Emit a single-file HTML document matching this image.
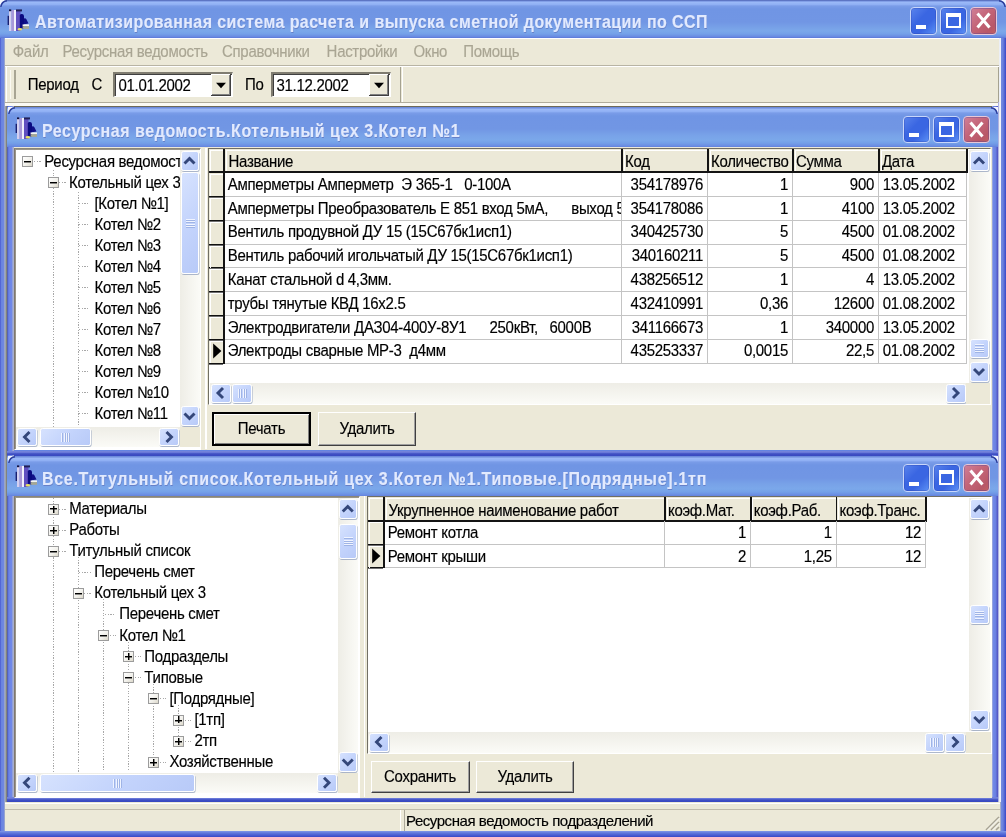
<!DOCTYPE html><html><head><meta charset="utf-8"><style>
*{margin:0;padding:0;box-sizing:border-box}
html,body{width:1006px;height:837px;overflow:hidden;background:#ECE9D8;position:relative;font-family:"Liberation Sans",sans-serif}
div,svg{position:absolute}
.t{position:absolute;white-space:pre;line-height:1;transform:scaleY(1.1);transform-origin:0 0;-webkit-text-stroke:0.15px currentColor;font-family:"Liberation Sans",sans-serif}
.sb{position:absolute;border-radius:2.5px;border:1px solid #FFFFFF;background:linear-gradient(135deg,#D6E2FE 0%,#C4D4FC 50%,#B8CAF8 100%);box-shadow:0.6px 1px 0.6px rgba(110,130,170,0.55)}
</style></head><body><div style="left:0;top:0;width:1006px;height:837px;overflow:hidden;filter:blur(0.4px)"><div style="position:absolute;left:0px;top:0px;width:1006px;height:837px;background:#6584E2"></div>
<div style="position:absolute;left:0px;top:0px;width:1006px;height:38px;background:linear-gradient(to bottom,#5064B0 0px,#6A86D8 1px,#9CBAF8 2px,#90B0F4 4.5px,#7A9CE8 6px,#7095E4 9px,#7196E4 22px,#78A2E8 28px,#7BA8EA 31px,#74A0E8 34px,#6A8CE2 36.5px,#5A78D8 38px);border-radius:7px 7px 0 0"></div>
<svg style="left:0px;top:0px" width="8" height="8"><path d="M0 0 L7 0 C3 0.5 0.5 3 0 7 Z" fill="#F4F6FF"/><path d="M7 0.8 C3.5 1.3 1.3 3.5 0.8 7" fill="none" stroke="#2A3C9A" stroke-width="1.4"/></svg>
<svg style="left:998px;top:0px" width="8" height="8"><path d="M8 0 L1 0 C5 0.5 7.5 3 8 7 Z" fill="#F4F6FF"/><path d="M1 0.8 C4.5 1.3 6.7 3.5 7.2 7" fill="none" stroke="#2A3C9A" stroke-width="1.4"/></svg>
<div style="position:absolute;left:0px;top:38px;width:8px;height:799px;background:linear-gradient(to right,#4858D0 0px,#6A84E0 1.5px,#7088E0 3.5px,#A8B0C8 5px,#909080 6.2px,#606878 7.2px,#5868D8 8px)"></div>
<div style="position:absolute;left:998px;top:38px;width:8px;height:799px;background:linear-gradient(to right,#5050C0 0px,#E8ECF4 0.8px,#F0F2F8 2.5px,#7088E0 3.5px,#6A80DC 5px,#3848C8 8px)"></div>
<div style="position:absolute;left:0px;top:831px;width:1006px;height:6px;background:linear-gradient(to bottom,#8098E8 0px,#6078DC 2px,#3848C8 6px)"></div>
<div style="position:absolute;left:5px;top:38px;width:993.5px;height:64px;background:#ECE9D8"></div>
<div style="position:absolute;left:0px;top:802px;width:1001px;height:29px;background:linear-gradient(to right,#4858D0 0px,#6A84E0 1.5px,#7088E0 3.5px,#A8B0C8 5px)"></div>
<div style="position:absolute;left:5px;top:802px;width:995px;height:29px;background:#ECE9D8"></div>
<svg style="left:7.4px;top:7.9px;filter:blur(0.35px)" width="24" height="24" viewBox="0 0 24 24">
<rect x="0.6" y="7.8" width="1.5" height="9.2" fill="#182070"/>
<rect x="2" y="3" width="2.5" height="20" fill="#D4D0F0"/>
<rect x="4.5" y="2" width="2.5" height="21" fill="#A898D8"/>
<rect x="7" y="2" width="2" height="21" fill="#F0F0FC"/>
<rect x="9" y="2" width="4.5" height="21" fill="#6050C0"/>
<rect x="2" y="1.4" width="2.2" height="1.8" fill="#101040"/>
<rect x="9" y="1.4" width="6" height="2" fill="#202058"/>
<path d="M12.8 7 Q13.5 5.8 15 6 Q16.8 6.2 17 8 L17 20.4 L12.8 20.4 Z" fill="#0A0A80"/>
<path d="M17 10.5 Q18.5 9.8 19.5 11.5 L21.5 15.5 L17 16.2 Z" fill="#101088"/>
<rect x="15.6" y="16.4" width="6.4" height="1.8" fill="#F4F4F0"/>
<rect x="15.6" y="18.2" width="6.4" height="2.6" fill="#A8A890"/>
<ellipse cx="12.8" cy="21.2" rx="2.3" ry="1.3" fill="#E8E060"/>
</svg>
<div class="t" style="left:34.5px;top:12.87px;font-size:17px;color:#E2EAFE;font-weight:bold;letter-spacing:0.45px;transform:scale(0.94,1.08);text-shadow:0.5px 0.5px 0 #6680C8;">Автоматизированная система расчета и выпуска сметной документации по ССП</div>
<div style="left:910.00px;top:7px;width:27px;height:27.5px;border-radius:4px;border:1.8px solid #C8D6FA;background:linear-gradient(135deg,#5A84EC 0%,#3A66E2 40%,#3A66E2 65%,#5C92F6 100%);box-shadow:inset 0 0 0 0.7px rgba(40,60,160,0.35)"></div>
<div style="position:absolute;left:916.0px;top:24.5px;width:10px;height:4px;background:#fff"></div>
<div style="left:939.75px;top:7px;width:27px;height:27.5px;border-radius:4px;border:1.8px solid #C8D6FA;background:linear-gradient(135deg,#5A84EC 0%,#3A66E2 40%,#3A66E2 65%,#5C92F6 100%);box-shadow:inset 0 0 0 0.7px rgba(40,60,160,0.35)"></div>
<div style="position:absolute;left:945.75px;top:13px;width:15px;height:15px;border:2px solid #fff;border-top-width:4px"></div>
<div style="left:969.50px;top:7px;width:27px;height:27.5px;border-radius:4px;border:1.8px solid #E8C8D8;background:linear-gradient(135deg,#D08098 0%,#C46478 45%,#B85868 80%,#C46060 100%);box-shadow:inset 0 0 0 0.7px rgba(40,60,160,0.35)"></div>
<svg style="left:969.50px;top:7px" width="27" height="27.5"><path d="M7.5 6.5 L19.5 20.5 M19.5 6.5 L7.5 20.5" stroke="#fff" stroke-width="3"/></svg>
<div style="position:absolute;left:5px;top:38px;width:993.5px;height:1px;background:#FFFFFF"></div>
<div style="position:absolute;left:5px;top:65px;width:993.5px;height:1px;background:#B8B4A4"></div>
<div style="position:absolute;left:5px;top:66px;width:993.5px;height:1px;background:#FFFFFF"></div>
<div class="t" style="left:12.75px;top:42.75px;font-size:15px;color:#A9A593;font-weight:normal;letter-spacing:-0.3px;">Файл</div>
<div class="t" style="left:62.4px;top:42.75px;font-size:15px;color:#A9A593;font-weight:normal;letter-spacing:-0.3px;">Ресурсная ведомость</div>
<div class="t" style="left:222px;top:42.75px;font-size:15px;color:#A9A593;font-weight:normal;letter-spacing:-0.3px;">Справочники</div>
<div class="t" style="left:326.6px;top:42.75px;font-size:15px;color:#A9A593;font-weight:normal;letter-spacing:-0.3px;">Настройки</div>
<div class="t" style="left:413.5px;top:42.75px;font-size:15px;color:#A9A593;font-weight:normal;letter-spacing:-0.3px;">Окно</div>
<div class="t" style="left:463.2px;top:42.75px;font-size:15px;color:#A9A593;font-weight:normal;letter-spacing:-0.3px;">Помощь</div>
<div style="position:absolute;left:5px;top:67px;width:396px;height:35px;border-right:1px solid #A5A290"></div>
<div style="position:absolute;left:402px;top:67px;width:1px;height:35px;background:#FFFFFF"></div>
<div style="position:absolute;left:998px;top:67px;width:1px;height:35px;background:#A5A290"></div>
<div style="position:absolute;left:5px;top:102px;width:993px;height:1px;background:#B0AC9C"></div>
<div style="position:absolute;left:5px;top:103px;width:993px;height:2.5px;background:#FBFAF4"></div>
<div style="position:absolute;left:5.5px;top:67px;width:1px;height:35px;background:#FFFFFF"></div>
<div style="position:absolute;left:9.5px;top:70px;width:1px;height:29px;background:#FAF9F2"></div>
<div style="position:absolute;left:14px;top:70px;width:1.5px;height:29px;background:#A8A594"></div>
<div class="t" style="left:27.8px;top:76.15px;font-size:15px;color:#000;font-weight:normal;letter-spacing:-0.3px;">Период</div>
<div class="t" style="left:91.5px;top:76.15px;font-size:15px;color:#000;font-weight:normal;letter-spacing:-0.3px;">С</div>
<div class="t" style="left:245px;top:76.15px;font-size:15px;color:#000;font-weight:normal;letter-spacing:-0.3px;">По</div>
<div style="position:absolute;left:112.5px;top:72px;width:120px;height:24.5px;background:#fff;border-top:2px solid #7F7C70;border-left:2px solid #7F7C70;border-right:1px solid #fff;border-bottom:1px solid #fff;box-shadow:inset 1px 1px 0 #404040"></div>
<div style="position:absolute;left:210.5px;top:74px;width:20px;height:21.5px;background:#ECE9D8;border-right:1px solid #404040;border-bottom:1px solid #404040;box-shadow:inset 1px 1px 0 #fff,inset -1px -1px 0 #808080"></div>
<svg style="left:210.5px;top:74px" width="20" height="21.5"><path d="M5 8.75 L15 8.75 L10 14.25 Z" fill="#000"/></svg>
<div class="t" style="left:118.5px;top:77.15px;font-size:15px;color:#000;font-weight:normal;letter-spacing:-0.3px;">01.01.2002</div>
<div style="position:absolute;left:270.5px;top:72px;width:120px;height:24.5px;background:#fff;border-top:2px solid #7F7C70;border-left:2px solid #7F7C70;border-right:1px solid #fff;border-bottom:1px solid #fff;box-shadow:inset 1px 1px 0 #404040"></div>
<div style="position:absolute;left:368.5px;top:74px;width:20px;height:21.5px;background:#ECE9D8;border-right:1px solid #404040;border-bottom:1px solid #404040;box-shadow:inset 1px 1px 0 #fff,inset -1px -1px 0 #808080"></div>
<svg style="left:368.5px;top:74px" width="20" height="21.5"><path d="M5 8.75 L15 8.75 L10 14.25 Z" fill="#000"/></svg>
<div class="t" style="left:276.5px;top:77.15px;font-size:15px;color:#000;font-weight:normal;letter-spacing:-0.3px;">31.12.2002</div>
<div style="position:absolute;left:7px;top:106px;width:991px;height:1px;background:#6E6A58"></div>
<div style="position:absolute;left:7.3px;top:106px;width:6.7px;height:349.5px;background:linear-gradient(to right,#505878 0px,#5868D8 0.8px,#6A84E6 2px,#7088E8 4.5px,#A8B0D0 6.2px)"></div>
<div style="position:absolute;left:992px;top:106px;width:6px;height:349.5px;background:linear-gradient(to right,#A8B0D8 0px,#7088E8 1.5px,#6A80E0 3.5px,#5050C0 6px)"></div>
<div style="position:absolute;left:7.3px;top:107px;width:990.7px;height:40px;background:linear-gradient(to bottom,#7090E0 0px,#6A86D8 1px,#9CBAF8 2px,#90B0F4 4.5px,#7A9CE8 6px,#7095E4 9px,#7196E4 22px,#78A2E8 28px,#7BA8EA 33px,#74A0E8 36px,#6A8CE2 39px,#5A78D8 41px)"></div>
<svg style="left:8px;top:107px" width="8" height="8"><path d="M0 0 L7 0 C3 0.5 0.5 3 0 7 Z" fill="#F4F6FF"/><path d="M7 0.8 C3.5 1.3 1.3 3.5 0.8 7" fill="none" stroke="#2A3C9A" stroke-width="1.4"/></svg>
<svg style="left:990px;top:107px" width="8" height="8"><path d="M8 0 L1 0 C5 0.5 7.5 3 8 7 Z" fill="#F4F6FF"/><path d="M1 0.8 C4.5 1.3 6.7 3.5 7.2 7" fill="none" stroke="#2A3C9A" stroke-width="1.4"/></svg>
<div style="position:absolute;left:7.3px;top:450.5px;width:990.7px;height:5px;background:linear-gradient(to bottom,#7888DC 0px,#6878D8 1.5px,#4050C4 2.8px,#3848C0 5px)"></div>
<svg style="left:15px;top:116px;filter:blur(0.35px)" width="24" height="24" viewBox="0 0 24 24">
<rect x="0.6" y="7.8" width="1.5" height="9.2" fill="#182070"/>
<rect x="2" y="3" width="2.5" height="20" fill="#D4D0F0"/>
<rect x="4.5" y="2" width="2.5" height="21" fill="#A898D8"/>
<rect x="7" y="2" width="2" height="21" fill="#F0F0FC"/>
<rect x="9" y="2" width="4.5" height="21" fill="#6050C0"/>
<rect x="2" y="1.4" width="2.2" height="1.8" fill="#101040"/>
<rect x="9" y="1.4" width="6" height="2" fill="#202058"/>
<path d="M12.8 7 Q13.5 5.8 15 6 Q16.8 6.2 17 8 L17 20.4 L12.8 20.4 Z" fill="#0A0A80"/>
<path d="M17 10.5 Q18.5 9.8 19.5 11.5 L21.5 15.5 L17 16.2 Z" fill="#101088"/>
<rect x="15.6" y="16.4" width="6.4" height="1.8" fill="#F4F4F0"/>
<rect x="15.6" y="18.2" width="6.4" height="2.6" fill="#A8A890"/>
<ellipse cx="12.8" cy="21.2" rx="2.3" ry="1.3" fill="#E8E060"/>
</svg>
<div class="t" style="left:42px;top:121.67px;font-size:17px;color:#E2EAFE;font-weight:bold;letter-spacing:0.6px;transform:scale(0.94,1.08);text-shadow:0.5px 0.5px 0 #6680C8;">Ресурсная ведомость.Котельный цех 3.Котел №1</div>
<div style="left:903.00px;top:115.5px;width:27px;height:27.5px;border-radius:4px;border:1.8px solid #C8D6FA;background:linear-gradient(135deg,#5A84EC 0%,#3A66E2 40%,#3A66E2 65%,#5C92F6 100%);box-shadow:inset 0 0 0 0.7px rgba(40,60,160,0.35)"></div>
<div style="position:absolute;left:909.0px;top:133.0px;width:10px;height:4px;background:#fff"></div>
<div style="left:932.75px;top:115.5px;width:27px;height:27.5px;border-radius:4px;border:1.8px solid #C8D6FA;background:linear-gradient(135deg,#5A84EC 0%,#3A66E2 40%,#3A66E2 65%,#5C92F6 100%);box-shadow:inset 0 0 0 0.7px rgba(40,60,160,0.35)"></div>
<div style="position:absolute;left:938.75px;top:121.5px;width:15px;height:15px;border:2px solid #fff;border-top-width:4px"></div>
<div style="left:962.50px;top:115.5px;width:27px;height:27.5px;border-radius:4px;border:1.8px solid #E8C8D8;background:linear-gradient(135deg,#D08098 0%,#C46478 45%,#B85868 80%,#C46060 100%);box-shadow:inset 0 0 0 0.7px rgba(40,60,160,0.35)"></div>
<svg style="left:962.50px;top:115.5px" width="27" height="27.5"><path d="M7.5 6.5 L19.5 20.5 M19.5 6.5 L7.5 20.5" stroke="#fff" stroke-width="3"/></svg>
<div style="position:absolute;left:14px;top:147px;width:978px;height:303px;background:#ECE9D8"></div>
<div style="position:absolute;left:205px;top:148px;width:1.8px;height:301px;background:#FFFFFF"></div>
<div style="position:absolute;left:7.3px;top:455px;width:6.7px;height:347px;background:linear-gradient(to right,#505878 0px,#5868D8 0.8px,#6A84E6 2px,#7088E8 4.5px,#A8B0D0 6.2px)"></div>
<div style="position:absolute;left:992px;top:455px;width:6px;height:347px;background:linear-gradient(to right,#A8B0D8 0px,#7088E8 1.5px,#6A80E0 3.5px,#5050C0 6px)"></div>
<div style="position:absolute;left:7.3px;top:456px;width:990.7px;height:40px;background:linear-gradient(to bottom,#7090E0 0px,#6A86D8 1px,#9CBAF8 2px,#90B0F4 4.5px,#7A9CE8 6px,#7095E4 9px,#7196E4 22px,#78A2E8 28px,#7BA8EA 33px,#74A0E8 36px,#6A8CE2 39px,#5A78D8 41px)"></div>
<svg style="left:8px;top:456px" width="8" height="8"><path d="M0 0 L7 0 C3 0.5 0.5 3 0 7 Z" fill="#F4F6FF"/><path d="M7 0.8 C3.5 1.3 1.3 3.5 0.8 7" fill="none" stroke="#2A3C9A" stroke-width="1.4"/></svg>
<svg style="left:990px;top:456px" width="8" height="8"><path d="M8 0 L1 0 C5 0.5 7.5 3 8 7 Z" fill="#F4F6FF"/><path d="M1 0.8 C4.5 1.3 6.7 3.5 7.2 7" fill="none" stroke="#2A3C9A" stroke-width="1.4"/></svg>
<div style="position:absolute;left:7.3px;top:797px;width:990.7px;height:5px;background:linear-gradient(to bottom,#7888DC 0px,#6878D8 1.5px,#4050C4 2.8px,#3848C0 5px)"></div>
<svg style="left:15px;top:464.2px;filter:blur(0.35px)" width="24" height="24" viewBox="0 0 24 24">
<rect x="0.6" y="7.8" width="1.5" height="9.2" fill="#182070"/>
<rect x="2" y="3" width="2.5" height="20" fill="#D4D0F0"/>
<rect x="4.5" y="2" width="2.5" height="21" fill="#A898D8"/>
<rect x="7" y="2" width="2" height="21" fill="#F0F0FC"/>
<rect x="9" y="2" width="4.5" height="21" fill="#6050C0"/>
<rect x="2" y="1.4" width="2.2" height="1.8" fill="#101040"/>
<rect x="9" y="1.4" width="6" height="2" fill="#202058"/>
<path d="M12.8 7 Q13.5 5.8 15 6 Q16.8 6.2 17 8 L17 20.4 L12.8 20.4 Z" fill="#0A0A80"/>
<path d="M17 10.5 Q18.5 9.8 19.5 11.5 L21.5 15.5 L17 16.2 Z" fill="#101088"/>
<rect x="15.6" y="16.4" width="6.4" height="1.8" fill="#F4F4F0"/>
<rect x="15.6" y="18.2" width="6.4" height="2.6" fill="#A8A890"/>
<ellipse cx="12.8" cy="21.2" rx="2.3" ry="1.3" fill="#E8E060"/>
</svg>
<div class="t" style="left:42px;top:470.07px;font-size:17px;color:#E2EAFE;font-weight:bold;letter-spacing:0.76px;transform:scale(0.94,1.08);text-shadow:0.5px 0.5px 0 #6680C8;">Все.Титульный список.Котельный цех 3.Котел №1.Типовые.[Подрядные].1тп</div>
<div style="left:903.00px;top:464px;width:27px;height:27.5px;border-radius:4px;border:1.8px solid #C8D6FA;background:linear-gradient(135deg,#5A84EC 0%,#3A66E2 40%,#3A66E2 65%,#5C92F6 100%);box-shadow:inset 0 0 0 0.7px rgba(40,60,160,0.35)"></div>
<div style="position:absolute;left:909.0px;top:481.5px;width:10px;height:4px;background:#fff"></div>
<div style="left:932.75px;top:464px;width:27px;height:27.5px;border-radius:4px;border:1.8px solid #C8D6FA;background:linear-gradient(135deg,#5A84EC 0%,#3A66E2 40%,#3A66E2 65%,#5C92F6 100%);box-shadow:inset 0 0 0 0.7px rgba(40,60,160,0.35)"></div>
<div style="position:absolute;left:938.75px;top:470px;width:15px;height:15px;border:2px solid #fff;border-top-width:4px"></div>
<div style="left:962.50px;top:464px;width:27px;height:27.5px;border-radius:4px;border:1.8px solid #E8C8D8;background:linear-gradient(135deg,#D08098 0%,#C46478 45%,#B85868 80%,#C46060 100%);box-shadow:inset 0 0 0 0.7px rgba(40,60,160,0.35)"></div>
<svg style="left:962.50px;top:464px" width="27" height="27.5"><path d="M7.5 6.5 L19.5 20.5 M19.5 6.5 L7.5 20.5" stroke="#fff" stroke-width="3"/></svg>
<div style="position:absolute;left:14px;top:496px;width:978px;height:301.5px;background:#ECE9D8"></div>
<div style="position:absolute;left:363.5px;top:496px;width:1.8px;height:301px;background:#FFFFFF"></div>
<div style="left:14px;top:148px;width:187px;height:302px;background:#fff;border-top:1px solid #8A8678;border-left:1.5px solid #807870;border-right:1px solid #fff;border-bottom:1.5px solid #fff;box-shadow:inset 1px 1px 0 #9A968A"></div>
<div style="position:absolute;left:33.5px;top:161.1px;width:7.5px;height:1px;background:repeating-linear-gradient(to right,#A8A8A8 0px,#A8A8A8 1.2px,transparent 1.2px,transparent 2.7px)"></div>
<div class="t" style="left:44.3px;top:152.55px;font-size:15px;color:#000;font-weight:normal;letter-spacing:-0.3px;">Ресурсная ведомость</div>
<div style="position:absolute;left:52.8px;top:170.4px;width:1px;height:6.099999999999994px;background:repeating-linear-gradient(to bottom,#A8A8A8 0px,#A8A8A8 1.2px,transparent 1.2px,transparent 2.7px)"></div>
<div style="position:absolute;left:59px;top:182.1px;width:7px;height:1px;background:repeating-linear-gradient(to right,#A8A8A8 0px,#A8A8A8 1.2px,transparent 1.2px,transparent 2.7px)"></div>
<div class="t" style="left:69px;top:173.55px;font-size:15px;color:#000;font-weight:normal;letter-spacing:-0.3px;">Котельный цех 3</div>
<div style="position:absolute;left:52.8px;top:187.5px;width:1px;height:239.5px;background:repeating-linear-gradient(to bottom,#A8A8A8 0px,#A8A8A8 1.2px,transparent 1.2px,transparent 2.7px)"></div>
<div style="position:absolute;left:77.6px;top:191.7px;width:1px;height:235.3px;background:repeating-linear-gradient(to bottom,#A8A8A8 0px,#A8A8A8 1.2px,transparent 1.2px,transparent 2.7px)"></div>
<div style="position:absolute;left:79px;top:203.1px;width:11px;height:1px;background:repeating-linear-gradient(to right,#A8A8A8 0px,#A8A8A8 1.2px,transparent 1.2px,transparent 2.7px)"></div>
<div class="t" style="left:94.5px;top:194.55px;font-size:15px;color:#000;font-weight:normal;letter-spacing:-0.3px;">[Котел №1]</div>
<div style="position:absolute;left:79px;top:224.1px;width:11px;height:1px;background:repeating-linear-gradient(to right,#A8A8A8 0px,#A8A8A8 1.2px,transparent 1.2px,transparent 2.7px)"></div>
<div class="t" style="left:94.5px;top:215.55px;font-size:15px;color:#000;font-weight:normal;letter-spacing:-0.3px;">Котел №2</div>
<div style="position:absolute;left:79px;top:245.1px;width:11px;height:1px;background:repeating-linear-gradient(to right,#A8A8A8 0px,#A8A8A8 1.2px,transparent 1.2px,transparent 2.7px)"></div>
<div class="t" style="left:94.5px;top:236.55px;font-size:15px;color:#000;font-weight:normal;letter-spacing:-0.3px;">Котел №3</div>
<div style="position:absolute;left:79px;top:266.1px;width:11px;height:1px;background:repeating-linear-gradient(to right,#A8A8A8 0px,#A8A8A8 1.2px,transparent 1.2px,transparent 2.7px)"></div>
<div class="t" style="left:94.5px;top:257.55px;font-size:15px;color:#000;font-weight:normal;letter-spacing:-0.3px;">Котел №4</div>
<div style="position:absolute;left:79px;top:287.1px;width:11px;height:1px;background:repeating-linear-gradient(to right,#A8A8A8 0px,#A8A8A8 1.2px,transparent 1.2px,transparent 2.7px)"></div>
<div class="t" style="left:94.5px;top:278.55px;font-size:15px;color:#000;font-weight:normal;letter-spacing:-0.3px;">Котел №5</div>
<div style="position:absolute;left:79px;top:308.1px;width:11px;height:1px;background:repeating-linear-gradient(to right,#A8A8A8 0px,#A8A8A8 1.2px,transparent 1.2px,transparent 2.7px)"></div>
<div class="t" style="left:94.5px;top:299.55px;font-size:15px;color:#000;font-weight:normal;letter-spacing:-0.3px;">Котел №6</div>
<div style="position:absolute;left:79px;top:329.1px;width:11px;height:1px;background:repeating-linear-gradient(to right,#A8A8A8 0px,#A8A8A8 1.2px,transparent 1.2px,transparent 2.7px)"></div>
<div class="t" style="left:94.5px;top:320.55px;font-size:15px;color:#000;font-weight:normal;letter-spacing:-0.3px;">Котел №7</div>
<div style="position:absolute;left:79px;top:350.1px;width:11px;height:1px;background:repeating-linear-gradient(to right,#A8A8A8 0px,#A8A8A8 1.2px,transparent 1.2px,transparent 2.7px)"></div>
<div class="t" style="left:94.5px;top:341.55px;font-size:15px;color:#000;font-weight:normal;letter-spacing:-0.3px;">Котел №8</div>
<div style="position:absolute;left:79px;top:371.1px;width:11px;height:1px;background:repeating-linear-gradient(to right,#A8A8A8 0px,#A8A8A8 1.2px,transparent 1.2px,transparent 2.7px)"></div>
<div class="t" style="left:94.5px;top:362.55px;font-size:15px;color:#000;font-weight:normal;letter-spacing:-0.3px;">Котел №9</div>
<div style="position:absolute;left:79px;top:392.1px;width:11px;height:1px;background:repeating-linear-gradient(to right,#A8A8A8 0px,#A8A8A8 1.2px,transparent 1.2px,transparent 2.7px)"></div>
<div class="t" style="left:94.5px;top:383.55px;font-size:15px;color:#000;font-weight:normal;letter-spacing:-0.3px;">Котел №10</div>
<div style="position:absolute;left:79px;top:413.1px;width:11px;height:1px;background:repeating-linear-gradient(to right,#A8A8A8 0px,#A8A8A8 1.2px,transparent 1.2px,transparent 2.7px)"></div>
<div class="t" style="left:94.5px;top:404.55px;font-size:15px;color:#000;font-weight:normal;letter-spacing:-0.3px;">Котел №11</div>
<div style="left:22.4px;top:156.1px;width:11px;height:11px;border:1px solid #9C9C9C;background:linear-gradient(135deg,#fff 0%,#F2F1EC 55%,#DCD8CA 100%)"></div>
<div style="position:absolute;left:24px;top:161px;width:7px;height:1px;background:#000"></div>
<div style="position:absolute;left:24px;top:162px;width:7px;height:1px;background:rgba(0,0,0,0.45)"></div>
<div style="left:47.8px;top:177.1px;width:11px;height:11px;border:1px solid #9C9C9C;background:linear-gradient(135deg,#fff 0%,#F2F1EC 55%,#DCD8CA 100%)"></div>
<div style="position:absolute;left:50px;top:182px;width:7px;height:1px;background:#000"></div>
<div style="position:absolute;left:50px;top:183px;width:7px;height:1px;background:rgba(0,0,0,0.45)"></div>
<div style="position:absolute;left:179.5px;top:150px;width:20px;height:277px;background:linear-gradient(to right,#EEEDE6,#FBFBF7)"></div>
<div class="sb" style="left:180.5px;top:151px;width:18px;height:20px"></div>
<svg style="left:0;top:0;overflow:visible" width="1" height="1"><path d="M184.5 163.5 L189.5 158.5 L194.5 163.5" fill="none" stroke="#34477A" stroke-width="2.9"/></svg>
<div class="sb" style="left:180.5px;top:406px;width:18px;height:20px"></div>
<svg style="left:0;top:0;overflow:visible" width="1" height="1"><path d="M184.5 413.5 L189.5 418.5 L194.5 413.5" fill="none" stroke="#34477A" stroke-width="2.9"/></svg>
<div class="sb" style="left:180.5px;top:172px;width:18px;height:102px"></div>
<div style="position:absolute;left:185.5px;top:219.0px;width:9px;height:1px;background:#F0F4FF;box-shadow:0 1px 0 #9FB4E6"></div>
<div style="position:absolute;left:185.5px;top:221.3px;width:9px;height:1px;background:#F0F4FF;box-shadow:0 1px 0 #9FB4E6"></div>
<div style="position:absolute;left:185.5px;top:223.6px;width:9px;height:1px;background:#F0F4FF;box-shadow:0 1px 0 #9FB4E6"></div>
<div style="position:absolute;left:185.5px;top:225.9px;width:9px;height:1px;background:#F0F4FF;box-shadow:0 1px 0 #9FB4E6"></div>
<div style="position:absolute;left:16px;top:427px;width:164px;height:20px;background:linear-gradient(to bottom,#EEEDE6,#FBFBF7)"></div>
<div class="sb" style="left:17px;top:428px;width:20px;height:18px"></div>
<svg style="left:0;top:0;overflow:visible" width="1" height="1"><path d="M29.5 432.0 L24.5 437.0 L29.5 442.0" fill="none" stroke="#34477A" stroke-width="2.9"/></svg>
<div class="sb" style="left:159px;top:428px;width:20px;height:18px"></div>
<svg style="left:0;top:0;overflow:visible" width="1" height="1"><path d="M166.5 432.0 L171.5 437.0 L166.5 442.0" fill="none" stroke="#34477A" stroke-width="2.9"/></svg>
<div class="sb" style="left:39.5px;top:428px;width:51.5px;height:18px"></div>
<div style="position:absolute;left:61.25px;top:433.0px;width:1px;height:9px;background:#F0F4FF;box-shadow:1px 0 0 #9FB4E6"></div>
<div style="position:absolute;left:63.55px;top:433.0px;width:1px;height:9px;background:#F0F4FF;box-shadow:1px 0 0 #9FB4E6"></div>
<div style="position:absolute;left:65.85px;top:433.0px;width:1px;height:9px;background:#F0F4FF;box-shadow:1px 0 0 #9FB4E6"></div>
<div style="position:absolute;left:68.15px;top:433.0px;width:1px;height:9px;background:#F0F4FF;box-shadow:1px 0 0 #9FB4E6"></div>
<div style="position:absolute;left:179.5px;top:427px;width:20px;height:20px;background:#ECE9D8"></div>
<div style="left:207.5px;top:148px;width:783.5px;height:257px;background:#fff;border-left:1.5px solid #716F64;border-top:1px solid #716F64;border-right:1px solid #fff;border-bottom:1px solid #fff"></div>
<div style="position:absolute;left:209.0px;top:149px;width:759.0px;height:22.5px;background:#ECE9D8"></div>
<div style="position:absolute;left:209.0px;top:173.2px;width:16.0px;height:190.40000000000003px;background:#ECE9D8"></div>
<div style="position:absolute;left:209.5px;top:149.5px;width:13.5px;height:1.2px;background:#fff"></div>
<div style="position:absolute;left:209.5px;top:149.5px;width:1.2px;height:22.0px;background:#fff"></div>
<div style="position:absolute;left:225.5px;top:149.5px;width:395.5px;height:1.2px;background:#fff"></div>
<div style="position:absolute;left:225.5px;top:149.5px;width:1.2px;height:22.0px;background:#fff"></div>
<div style="position:absolute;left:623.5px;top:149.5px;width:83.5px;height:1.2px;background:#fff"></div>
<div style="position:absolute;left:623.5px;top:149.5px;width:1.2px;height:22.0px;background:#fff"></div>
<div style="position:absolute;left:709.5px;top:149.5px;width:82.5px;height:1.2px;background:#fff"></div>
<div style="position:absolute;left:709.5px;top:149.5px;width:1.2px;height:22.0px;background:#fff"></div>
<div style="position:absolute;left:794.5px;top:149.5px;width:83.5px;height:1.2px;background:#fff"></div>
<div style="position:absolute;left:794.5px;top:149.5px;width:1.2px;height:22.0px;background:#fff"></div>
<div style="position:absolute;left:880.5px;top:149.5px;width:85.5px;height:1.2px;background:#fff"></div>
<div style="position:absolute;left:880.5px;top:149.5px;width:1.2px;height:22.0px;background:#fff"></div>
<div style="position:absolute;left:209.0px;top:171.0px;width:759.0px;height:1.6px;background:#141414"></div>
<div style="position:absolute;left:223.4px;top:149px;width:1.6px;height:214.60000000000002px;background:#141414"></div>
<div style="position:absolute;left:621px;top:149px;width:1.6px;height:22.5px;background:#141414"></div>
<div style="position:absolute;left:707px;top:149px;width:1.6px;height:22.5px;background:#141414"></div>
<div style="position:absolute;left:792px;top:149px;width:1.6px;height:22.5px;background:#141414"></div>
<div style="position:absolute;left:878px;top:149px;width:1.6px;height:22.5px;background:#141414"></div>
<div style="position:absolute;left:966px;top:149px;width:1.6px;height:22.5px;background:#141414"></div>
<div style="position:absolute;left:621px;top:173.2px;width:1.3px;height:190.40000000000003px;background:#C4C4C4"></div>
<div style="position:absolute;left:707px;top:173.2px;width:1.3px;height:190.40000000000003px;background:#C4C4C4"></div>
<div style="position:absolute;left:792px;top:173.2px;width:1.3px;height:190.40000000000003px;background:#C4C4C4"></div>
<div style="position:absolute;left:878px;top:173.2px;width:1.3px;height:190.40000000000003px;background:#C4C4C4"></div>
<div style="position:absolute;left:966px;top:173.2px;width:1.3px;height:190.40000000000003px;background:#C4C4C4"></div>
<div style="position:absolute;left:225px;top:196px;width:742px;height:1px;background:#C4C4C4"></div>
<div style="position:absolute;left:209.0px;top:196px;width:14.4px;height:1px;background:#101010"></div>
<div style="position:absolute;left:209.0px;top:197px;width:14.4px;height:1px;background:#707070"></div>
<div style="position:absolute;left:209.5px;top:198px;width:13.4px;height:1px;background:#fff"></div>
<div style="position:absolute;left:225px;top:220px;width:742px;height:1px;background:#C4C4C4"></div>
<div style="position:absolute;left:209.0px;top:220px;width:14.4px;height:1px;background:#101010"></div>
<div style="position:absolute;left:209.0px;top:221px;width:14.4px;height:1px;background:#707070"></div>
<div style="position:absolute;left:209.5px;top:222px;width:13.4px;height:1px;background:#fff"></div>
<div style="position:absolute;left:225px;top:244px;width:742px;height:1px;background:#C4C4C4"></div>
<div style="position:absolute;left:209.0px;top:244px;width:14.4px;height:1px;background:#101010"></div>
<div style="position:absolute;left:209.0px;top:245px;width:14.4px;height:1px;background:#707070"></div>
<div style="position:absolute;left:209.5px;top:246px;width:13.4px;height:1px;background:#fff"></div>
<div style="position:absolute;left:225px;top:267px;width:742px;height:1px;background:#C4C4C4"></div>
<div style="position:absolute;left:209.0px;top:267px;width:14.4px;height:1px;background:#101010"></div>
<div style="position:absolute;left:209.0px;top:268px;width:14.4px;height:1px;background:#707070"></div>
<div style="position:absolute;left:209.5px;top:269px;width:13.4px;height:1px;background:#fff"></div>
<div style="position:absolute;left:225px;top:291px;width:742px;height:1px;background:#C4C4C4"></div>
<div style="position:absolute;left:209.0px;top:291px;width:14.4px;height:1px;background:#101010"></div>
<div style="position:absolute;left:209.0px;top:292px;width:14.4px;height:1px;background:#707070"></div>
<div style="position:absolute;left:209.5px;top:293px;width:13.4px;height:1px;background:#fff"></div>
<div style="position:absolute;left:225px;top:315px;width:742px;height:1px;background:#C4C4C4"></div>
<div style="position:absolute;left:209.0px;top:315px;width:14.4px;height:1px;background:#101010"></div>
<div style="position:absolute;left:209.0px;top:316px;width:14.4px;height:1px;background:#707070"></div>
<div style="position:absolute;left:209.5px;top:317px;width:13.4px;height:1px;background:#fff"></div>
<div style="position:absolute;left:225px;top:339px;width:742px;height:1px;background:#C4C4C4"></div>
<div style="position:absolute;left:209.0px;top:339px;width:14.4px;height:1px;background:#101010"></div>
<div style="position:absolute;left:209.0px;top:340px;width:14.4px;height:1px;background:#707070"></div>
<div style="position:absolute;left:209.5px;top:341px;width:13.4px;height:1px;background:#fff"></div>
<div style="position:absolute;left:225px;top:363px;width:742px;height:1px;background:#C4C4C4"></div>
<div style="position:absolute;left:209.0px;top:363px;width:14.4px;height:1px;background:#101010"></div>
<div style="position:absolute;left:209.0px;top:364px;width:14.4px;height:1px;background:#707070"></div>
<div style="position:absolute;left:209.5px;top:174px;width:1px;height:22px;background:#fff"></div>
<div style="position:absolute;left:209.5px;top:198px;width:1px;height:22px;background:#fff"></div>
<div style="position:absolute;left:209.5px;top:222px;width:1px;height:22px;background:#fff"></div>
<div style="position:absolute;left:209.5px;top:246px;width:1px;height:22px;background:#fff"></div>
<div style="position:absolute;left:209.5px;top:269px;width:1px;height:22px;background:#fff"></div>
<div style="position:absolute;left:209.5px;top:293px;width:1px;height:22px;background:#fff"></div>
<div style="position:absolute;left:209.5px;top:317px;width:1px;height:22px;background:#fff"></div>
<div style="position:absolute;left:209.5px;top:341px;width:1px;height:22px;background:#fff"></div>
<div style="position:absolute;left:209.5px;top:173.5px;width:13.4px;height:1px;background:#fff"></div>
<svg style="left:209.0px;top:343.19999999999993px" width="16.0" height="16"><path d="M4.2 0.6 L12.4 8 L4.2 15.4 Z" fill="#000"/></svg>
<div style="left:225px;top:149px;width:396px;height:22.5px;overflow:hidden">
<div class="t" style="left:3.5px;top:3.75px;font-size:15px;letter-spacing:-0.3px">Название</div></div>
<div style="left:623px;top:149px;width:84px;height:22.5px;overflow:hidden">
<div class="t" style="left:2.0px;top:3.75px;font-size:15px;letter-spacing:-0.3px">Код</div></div>
<div style="left:709px;top:149px;width:83px;height:22.5px;overflow:hidden">
<div class="t" style="left:2.0px;top:3.75px;font-size:15px;letter-spacing:-0.3px">Количество</div></div>
<div style="left:794px;top:149px;width:84px;height:22.5px;overflow:hidden">
<div class="t" style="left:2.0px;top:3.75px;font-size:15px;letter-spacing:-0.3px">Сумма</div></div>
<div style="left:880px;top:149px;width:86px;height:22.5px;overflow:hidden">
<div class="t" style="left:2.0px;top:3.75px;font-size:15px;letter-spacing:-0.3px">Дата</div></div>
<div style="left:225px;top:173.2px;width:396px;height:22.8px;overflow:hidden">
<div class="t" style="left:2.7px;top:2.65px;font-size:15px;letter-spacing:-0.3px">Амперметры Амперметр  Э 365-1   0-100А</div></div>
<div class="t" style="left:303px;width:400px;text-align:right;top:175.85px;font-size:15px;color:#000;font-weight:normal;letter-spacing:-0.3px;">354178976</div>
<div class="t" style="left:388px;width:400px;text-align:right;top:175.85px;font-size:15px;color:#000;font-weight:normal;letter-spacing:-0.3px;">1</div>
<div class="t" style="left:474px;width:400px;text-align:right;top:175.85px;font-size:15px;color:#000;font-weight:normal;letter-spacing:-0.3px;">900</div>
<div style="left:880px;top:173.2px;width:86px;height:22.8px;overflow:hidden">
<div class="t" style="left:2.7px;top:2.65px;font-size:15px;letter-spacing:-0.3px">13.05.2002</div></div>
<div style="left:225px;top:197.0px;width:396px;height:22.8px;overflow:hidden">
<div class="t" style="left:2.7px;top:2.65px;font-size:15px;letter-spacing:-0.3px">Амперметры Преобразователь Е 851 вход 5мА,      выход 5мА</div></div>
<div class="t" style="left:303px;width:400px;text-align:right;top:199.65px;font-size:15px;color:#000;font-weight:normal;letter-spacing:-0.3px;">354178086</div>
<div class="t" style="left:388px;width:400px;text-align:right;top:199.65px;font-size:15px;color:#000;font-weight:normal;letter-spacing:-0.3px;">1</div>
<div class="t" style="left:474px;width:400px;text-align:right;top:199.65px;font-size:15px;color:#000;font-weight:normal;letter-spacing:-0.3px;">4100</div>
<div style="left:880px;top:197.0px;width:86px;height:22.8px;overflow:hidden">
<div class="t" style="left:2.7px;top:2.65px;font-size:15px;letter-spacing:-0.3px">13.05.2002</div></div>
<div style="left:225px;top:220.79999999999998px;width:396px;height:22.8px;overflow:hidden">
<div class="t" style="left:2.7px;top:2.65px;font-size:15px;letter-spacing:-0.3px">Вентиль продувной ДУ 15 (15С67бк1исп1)</div></div>
<div class="t" style="left:303px;width:400px;text-align:right;top:223.45px;font-size:15px;color:#000;font-weight:normal;letter-spacing:-0.3px;">340425730</div>
<div class="t" style="left:388px;width:400px;text-align:right;top:223.45px;font-size:15px;color:#000;font-weight:normal;letter-spacing:-0.3px;">5</div>
<div class="t" style="left:474px;width:400px;text-align:right;top:223.45px;font-size:15px;color:#000;font-weight:normal;letter-spacing:-0.3px;">4500</div>
<div style="left:880px;top:220.79999999999998px;width:86px;height:22.8px;overflow:hidden">
<div class="t" style="left:2.7px;top:2.65px;font-size:15px;letter-spacing:-0.3px">01.08.2002</div></div>
<div style="left:225px;top:244.6px;width:396px;height:22.8px;overflow:hidden">
<div class="t" style="left:2.7px;top:2.65px;font-size:15px;letter-spacing:-0.3px">Вентиль рабочий игольчатый ДУ 15(15С67бк1исп1)</div></div>
<div class="t" style="left:303px;width:400px;text-align:right;top:247.25px;font-size:15px;color:#000;font-weight:normal;letter-spacing:-0.3px;">340160211</div>
<div class="t" style="left:388px;width:400px;text-align:right;top:247.25px;font-size:15px;color:#000;font-weight:normal;letter-spacing:-0.3px;">5</div>
<div class="t" style="left:474px;width:400px;text-align:right;top:247.25px;font-size:15px;color:#000;font-weight:normal;letter-spacing:-0.3px;">4500</div>
<div style="left:880px;top:244.6px;width:86px;height:22.8px;overflow:hidden">
<div class="t" style="left:2.7px;top:2.65px;font-size:15px;letter-spacing:-0.3px">01.08.2002</div></div>
<div style="left:225px;top:268.4px;width:396px;height:22.8px;overflow:hidden">
<div class="t" style="left:2.7px;top:2.65px;font-size:15px;letter-spacing:-0.3px">Канат стальной d 4,3мм.</div></div>
<div class="t" style="left:303px;width:400px;text-align:right;top:271.05px;font-size:15px;color:#000;font-weight:normal;letter-spacing:-0.3px;">438256512</div>
<div class="t" style="left:388px;width:400px;text-align:right;top:271.05px;font-size:15px;color:#000;font-weight:normal;letter-spacing:-0.3px;">1</div>
<div class="t" style="left:474px;width:400px;text-align:right;top:271.05px;font-size:15px;color:#000;font-weight:normal;letter-spacing:-0.3px;">4</div>
<div style="left:880px;top:268.4px;width:86px;height:22.8px;overflow:hidden">
<div class="t" style="left:2.7px;top:2.65px;font-size:15px;letter-spacing:-0.3px">13.05.2002</div></div>
<div style="left:225px;top:292.2px;width:396px;height:22.8px;overflow:hidden">
<div class="t" style="left:2.7px;top:2.65px;font-size:15px;letter-spacing:-0.3px">трубы тянутые КВД 16х2.5</div></div>
<div class="t" style="left:303px;width:400px;text-align:right;top:294.85px;font-size:15px;color:#000;font-weight:normal;letter-spacing:-0.3px;">432410991</div>
<div class="t" style="left:388px;width:400px;text-align:right;top:294.85px;font-size:15px;color:#000;font-weight:normal;letter-spacing:-0.3px;">0,36</div>
<div class="t" style="left:474px;width:400px;text-align:right;top:294.85px;font-size:15px;color:#000;font-weight:normal;letter-spacing:-0.3px;">12600</div>
<div style="left:880px;top:292.2px;width:86px;height:22.8px;overflow:hidden">
<div class="t" style="left:2.7px;top:2.65px;font-size:15px;letter-spacing:-0.3px">01.08.2002</div></div>
<div style="left:225px;top:316.0px;width:396px;height:22.8px;overflow:hidden">
<div class="t" style="left:2.7px;top:2.65px;font-size:15px;letter-spacing:-0.3px">Электродвигатели ДАЗ04-400У-8У1      250кВт,   6000В</div></div>
<div class="t" style="left:303px;width:400px;text-align:right;top:318.65px;font-size:15px;color:#000;font-weight:normal;letter-spacing:-0.3px;">341166673</div>
<div class="t" style="left:388px;width:400px;text-align:right;top:318.65px;font-size:15px;color:#000;font-weight:normal;letter-spacing:-0.3px;">1</div>
<div class="t" style="left:474px;width:400px;text-align:right;top:318.65px;font-size:15px;color:#000;font-weight:normal;letter-spacing:-0.3px;">340000</div>
<div style="left:880px;top:316.0px;width:86px;height:22.8px;overflow:hidden">
<div class="t" style="left:2.7px;top:2.65px;font-size:15px;letter-spacing:-0.3px">13.05.2002</div></div>
<div style="left:225px;top:339.79999999999995px;width:396px;height:22.8px;overflow:hidden">
<div class="t" style="left:2.7px;top:2.65px;font-size:15px;letter-spacing:-0.3px">Электроды сварные МР-3  д4мм</div></div>
<div class="t" style="left:303px;width:400px;text-align:right;top:342.45px;font-size:15px;color:#000;font-weight:normal;letter-spacing:-0.3px;">435253337</div>
<div class="t" style="left:388px;width:400px;text-align:right;top:342.45px;font-size:15px;color:#000;font-weight:normal;letter-spacing:-0.3px;">0,0015</div>
<div class="t" style="left:474px;width:400px;text-align:right;top:342.45px;font-size:15px;color:#000;font-weight:normal;letter-spacing:-0.3px;">22,5</div>
<div style="left:880px;top:339.79999999999995px;width:86px;height:22.8px;overflow:hidden">
<div class="t" style="left:2.7px;top:2.65px;font-size:15px;letter-spacing:-0.3px">01.08.2002</div></div>
<div style="position:absolute;left:968.5px;top:150px;width:21px;height:232.5px;background:linear-gradient(to right,#EEEDE6,#FBFBF7)"></div>
<div class="sb" style="left:969.5px;top:151px;width:19px;height:20px"></div>
<svg style="left:0;top:0;overflow:visible" width="1" height="1"><path d="M974.0 163.5 L979.0 158.5 L984.0 163.5" fill="none" stroke="#34477A" stroke-width="2.9"/></svg>
<div class="sb" style="left:969.5px;top:361.5px;width:19px;height:20px"></div>
<svg style="left:0;top:0;overflow:visible" width="1" height="1"><path d="M974.0 369.0 L979.0 374.0 L984.0 369.0" fill="none" stroke="#34477A" stroke-width="2.9"/></svg>
<div class="sb" style="left:969.5px;top:338.8px;width:19px;height:18.80000000000001px"></div>
<div style="position:absolute;left:975.0px;top:344.20000000000005px;width:9px;height:1px;background:#F0F4FF;box-shadow:0 1px 0 #9FB4E6"></div>
<div style="position:absolute;left:975.0px;top:346.50000000000006px;width:9px;height:1px;background:#F0F4FF;box-shadow:0 1px 0 #9FB4E6"></div>
<div style="position:absolute;left:975.0px;top:348.80000000000007px;width:9px;height:1px;background:#F0F4FF;box-shadow:0 1px 0 #9FB4E6"></div>
<div style="position:absolute;left:975.0px;top:351.1px;width:9px;height:1px;background:#F0F4FF;box-shadow:0 1px 0 #9FB4E6"></div>
<div style="position:absolute;left:209.5px;top:382.5px;width:757px;height:21px;background:linear-gradient(to bottom,#EEEDE6,#FBFBF7)"></div>
<div class="sb" style="left:210.5px;top:383.5px;width:20px;height:19px"></div>
<svg style="left:0;top:0;overflow:visible" width="1" height="1"><path d="M223.0 388.0 L218.0 393.0 L223.0 398.0" fill="none" stroke="#34477A" stroke-width="2.9"/></svg>
<div class="sb" style="left:945.5px;top:383.5px;width:20px;height:19px"></div>
<svg style="left:0;top:0;overflow:visible" width="1" height="1"><path d="M953.0 388.0 L958.0 393.0 L953.0 398.0" fill="none" stroke="#34477A" stroke-width="2.9"/></svg>
<div class="sb" style="left:232px;top:383.5px;width:20px;height:19px"></div>
<div style="position:absolute;left:238.0px;top:389.0px;width:1px;height:9px;background:#F0F4FF;box-shadow:1px 0 0 #9FB4E6"></div>
<div style="position:absolute;left:240.3px;top:389.0px;width:1px;height:9px;background:#F0F4FF;box-shadow:1px 0 0 #9FB4E6"></div>
<div style="position:absolute;left:242.6px;top:389.0px;width:1px;height:9px;background:#F0F4FF;box-shadow:1px 0 0 #9FB4E6"></div>
<div style="position:absolute;left:244.9px;top:389.0px;width:1px;height:9px;background:#F0F4FF;box-shadow:1px 0 0 #9FB4E6"></div>
<div style="position:absolute;left:966px;top:382.5px;width:24px;height:21.5px;background:#ECE9D8"></div>
<div style="left:212px;top:412px;width:99px;height:34px;border:2px solid #000;background:#ECE9D8;box-shadow:inset 1px 1px 0 #fff,inset -1px -1px 0 #808080"></div>
<div class="t" style="left:212px;width:99px;text-align:center;top:420.0px;font-size:15px;letter-spacing:-0.3px">Печать</div>
<div style="left:318px;top:412px;width:98px;height:34px;border-right:1.5px solid #404040;border-bottom:1.5px solid #404040;border-top:1px solid #fff;border-left:1px solid #fff;background:#ECE9D8;box-shadow:inset -1px -1px 0 #A0A0A0"></div>
<div class="t" style="left:318px;width:98px;text-align:center;top:420.0px;font-size:15px;letter-spacing:-0.3px">Удалить</div>
<div style="left:14px;top:496px;width:346px;height:301.5px;background:#fff;border-top:1px solid #8A8678;border-left:1.5px solid #807870;border-right:1px solid #fff;border-bottom:1.5px solid #fff;box-shadow:inset 1px 1px 0 #9A968A"></div>
<div style="position:absolute;left:52.9px;top:498px;width:1px;height:274px;background:repeating-linear-gradient(to bottom,#A8A8A8 0px,#A8A8A8 1.2px,transparent 1.2px,transparent 2.7px)"></div>
<div style="position:absolute;left:77.95px;top:557.2px;width:1px;height:214.79999999999995px;background:repeating-linear-gradient(to bottom,#A8A8A8 0px,#A8A8A8 1.2px,transparent 1.2px,transparent 2.7px)"></div>
<div style="position:absolute;left:103.0px;top:599.4px;width:1px;height:172.60000000000002px;background:repeating-linear-gradient(to bottom,#A8A8A8 0px,#A8A8A8 1.2px,transparent 1.2px,transparent 2.7px)"></div>
<div style="position:absolute;left:128.05px;top:641.6px;width:1px;height:130.39999999999998px;background:repeating-linear-gradient(to bottom,#A8A8A8 0px,#A8A8A8 1.2px,transparent 1.2px,transparent 2.7px)"></div>
<div style="position:absolute;left:153.1px;top:683.8px;width:1px;height:72.90000000000009px;background:repeating-linear-gradient(to bottom,#A8A8A8 0px,#A8A8A8 1.2px,transparent 1.2px,transparent 2.7px)"></div>
<div style="position:absolute;left:178.15px;top:704.9px;width:1px;height:30.700000000000045px;background:repeating-linear-gradient(to bottom,#A8A8A8 0px,#A8A8A8 1.2px,transparent 1.2px,transparent 2.7px)"></div>
<div style="position:absolute;left:59.4px;top:508.5px;width:6.500000000000007px;height:1px;background:repeating-linear-gradient(to right,#A8A8A8 0px,#A8A8A8 1.2px,transparent 1.2px,transparent 2.7px)"></div>
<div class="t" style="left:69.2px;top:499.95px;font-size:15px;color:#000;font-weight:normal;letter-spacing:-0.3px;">Материалы</div>
<div style="position:absolute;left:59.4px;top:529.6px;width:6.500000000000007px;height:1px;background:repeating-linear-gradient(to right,#A8A8A8 0px,#A8A8A8 1.2px,transparent 1.2px,transparent 2.7px)"></div>
<div class="t" style="left:69.2px;top:521.05px;font-size:15px;color:#000;font-weight:normal;letter-spacing:-0.3px;">Работы</div>
<div style="position:absolute;left:59.4px;top:550.7px;width:6.500000000000007px;height:1px;background:repeating-linear-gradient(to right,#A8A8A8 0px,#A8A8A8 1.2px,transparent 1.2px,transparent 2.7px)"></div>
<div class="t" style="left:69.2px;top:542.15px;font-size:15px;color:#000;font-weight:normal;letter-spacing:-0.3px;">Титульный список</div>
<div style="position:absolute;left:79.45px;top:571.8px;width:11.5px;height:1px;background:repeating-linear-gradient(to right,#A8A8A8 0px,#A8A8A8 1.2px,transparent 1.2px,transparent 2.7px)"></div>
<div class="t" style="left:94.25px;top:563.25px;font-size:15px;color:#000;font-weight:normal;letter-spacing:-0.3px;">Перечень смет</div>
<div style="position:absolute;left:84.45px;top:592.9px;width:6.5px;height:1px;background:repeating-linear-gradient(to right,#A8A8A8 0px,#A8A8A8 1.2px,transparent 1.2px,transparent 2.7px)"></div>
<div class="t" style="left:94.25px;top:584.35px;font-size:15px;color:#000;font-weight:normal;letter-spacing:-0.3px;">Котельный цех 3</div>
<div style="position:absolute;left:104.5px;top:614.0px;width:11.5px;height:1px;background:repeating-linear-gradient(to right,#A8A8A8 0px,#A8A8A8 1.2px,transparent 1.2px,transparent 2.7px)"></div>
<div class="t" style="left:119.3px;top:605.45px;font-size:15px;color:#000;font-weight:normal;letter-spacing:-0.3px;">Перечень смет</div>
<div style="position:absolute;left:109.5px;top:635.1px;width:6.5px;height:1px;background:repeating-linear-gradient(to right,#A8A8A8 0px,#A8A8A8 1.2px,transparent 1.2px,transparent 2.7px)"></div>
<div class="t" style="left:119.3px;top:626.55px;font-size:15px;color:#000;font-weight:normal;letter-spacing:-0.3px;">Котел №1</div>
<div style="position:absolute;left:134.55px;top:656.2px;width:6.5px;height:1px;background:repeating-linear-gradient(to right,#A8A8A8 0px,#A8A8A8 1.2px,transparent 1.2px,transparent 2.7px)"></div>
<div class="t" style="left:144.35000000000002px;top:647.65px;font-size:15px;color:#000;font-weight:normal;letter-spacing:-0.3px;">Подразделы</div>
<div style="position:absolute;left:134.55px;top:677.3px;width:6.5px;height:1px;background:repeating-linear-gradient(to right,#A8A8A8 0px,#A8A8A8 1.2px,transparent 1.2px,transparent 2.7px)"></div>
<div class="t" style="left:144.35000000000002px;top:668.75px;font-size:15px;color:#000;font-weight:normal;letter-spacing:-0.3px;">Типовые</div>
<div style="position:absolute;left:159.6px;top:698.4px;width:6.5px;height:1px;background:repeating-linear-gradient(to right,#A8A8A8 0px,#A8A8A8 1.2px,transparent 1.2px,transparent 2.7px)"></div>
<div class="t" style="left:169.4px;top:689.85px;font-size:15px;color:#000;font-weight:normal;letter-spacing:-0.3px;">[Подрядные]</div>
<div style="position:absolute;left:184.65px;top:719.5px;width:6.5px;height:1px;background:repeating-linear-gradient(to right,#A8A8A8 0px,#A8A8A8 1.2px,transparent 1.2px,transparent 2.7px)"></div>
<div class="t" style="left:194.45000000000002px;top:710.95px;font-size:15px;color:#000;font-weight:normal;letter-spacing:-0.3px;">[1тп]</div>
<div style="position:absolute;left:184.65px;top:740.6px;width:6.5px;height:1px;background:repeating-linear-gradient(to right,#A8A8A8 0px,#A8A8A8 1.2px,transparent 1.2px,transparent 2.7px)"></div>
<div class="t" style="left:194.45000000000002px;top:732.05px;font-size:15px;color:#000;font-weight:normal;letter-spacing:-0.3px;">2тп</div>
<div style="position:absolute;left:159.6px;top:761.7px;width:6.5px;height:1px;background:repeating-linear-gradient(to right,#A8A8A8 0px,#A8A8A8 1.2px,transparent 1.2px,transparent 2.7px)"></div>
<div class="t" style="left:169.4px;top:753.15px;font-size:15px;color:#000;font-weight:normal;letter-spacing:-0.3px;">Хозяйственные</div>
<div style="left:47.9px;top:503.5px;width:11px;height:11px;border:1px solid #9C9C9C;background:linear-gradient(135deg,#fff 0%,#F2F1EC 55%,#DCD8CA 100%)"></div>
<div style="position:absolute;left:50px;top:508px;width:7px;height:1px;background:#000"></div>
<div style="position:absolute;left:50px;top:509px;width:7px;height:1px;background:rgba(0,0,0,0.45)"></div>
<div style="position:absolute;left:53px;top:506px;width:1px;height:7px;background:#000"></div>
<div style="position:absolute;left:54px;top:506px;width:1px;height:7px;background:rgba(0,0,0,0.45)"></div>
<div style="left:47.9px;top:524.6px;width:11px;height:11px;border:1px solid #9C9C9C;background:linear-gradient(135deg,#fff 0%,#F2F1EC 55%,#DCD8CA 100%)"></div>
<div style="position:absolute;left:50px;top:530px;width:7px;height:1px;background:#000"></div>
<div style="position:absolute;left:50px;top:531px;width:7px;height:1px;background:rgba(0,0,0,0.45)"></div>
<div style="position:absolute;left:53px;top:527px;width:1px;height:7px;background:#000"></div>
<div style="position:absolute;left:54px;top:527px;width:1px;height:7px;background:rgba(0,0,0,0.45)"></div>
<div style="left:47.9px;top:545.7px;width:11px;height:11px;border:1px solid #9C9C9C;background:linear-gradient(135deg,#fff 0%,#F2F1EC 55%,#DCD8CA 100%)"></div>
<div style="position:absolute;left:50px;top:551px;width:7px;height:1px;background:#000"></div>
<div style="position:absolute;left:50px;top:552px;width:7px;height:1px;background:rgba(0,0,0,0.45)"></div>
<div style="left:72.95px;top:587.9px;width:11px;height:11px;border:1px solid #9C9C9C;background:linear-gradient(135deg,#fff 0%,#F2F1EC 55%,#DCD8CA 100%)"></div>
<div style="position:absolute;left:75px;top:593px;width:7px;height:1px;background:#000"></div>
<div style="position:absolute;left:75px;top:594px;width:7px;height:1px;background:rgba(0,0,0,0.45)"></div>
<div style="left:98.0px;top:630.1px;width:11px;height:11px;border:1px solid #9C9C9C;background:linear-gradient(135deg,#fff 0%,#F2F1EC 55%,#DCD8CA 100%)"></div>
<div style="position:absolute;left:100px;top:635px;width:7px;height:1px;background:#000"></div>
<div style="position:absolute;left:100px;top:636px;width:7px;height:1px;background:rgba(0,0,0,0.45)"></div>
<div style="left:123.05000000000001px;top:651.2px;width:11px;height:11px;border:1px solid #9C9C9C;background:linear-gradient(135deg,#fff 0%,#F2F1EC 55%,#DCD8CA 100%)"></div>
<div style="position:absolute;left:125px;top:656px;width:7px;height:1px;background:#000"></div>
<div style="position:absolute;left:125px;top:657px;width:7px;height:1px;background:rgba(0,0,0,0.45)"></div>
<div style="position:absolute;left:128px;top:653px;width:1px;height:7px;background:#000"></div>
<div style="position:absolute;left:129px;top:653px;width:1px;height:7px;background:rgba(0,0,0,0.45)"></div>
<div style="left:123.05000000000001px;top:672.3px;width:11px;height:11px;border:1px solid #9C9C9C;background:linear-gradient(135deg,#fff 0%,#F2F1EC 55%,#DCD8CA 100%)"></div>
<div style="position:absolute;left:125px;top:677px;width:7px;height:1px;background:#000"></div>
<div style="position:absolute;left:125px;top:678px;width:7px;height:1px;background:rgba(0,0,0,0.45)"></div>
<div style="left:148.1px;top:693.4px;width:11px;height:11px;border:1px solid #9C9C9C;background:linear-gradient(135deg,#fff 0%,#F2F1EC 55%,#DCD8CA 100%)"></div>
<div style="position:absolute;left:150px;top:698px;width:7px;height:1px;background:#000"></div>
<div style="position:absolute;left:150px;top:699px;width:7px;height:1px;background:rgba(0,0,0,0.45)"></div>
<div style="left:173.15px;top:714.5px;width:11px;height:11px;border:1px solid #9C9C9C;background:linear-gradient(135deg,#fff 0%,#F2F1EC 55%,#DCD8CA 100%)"></div>
<div style="position:absolute;left:175px;top:720px;width:7px;height:1px;background:#000"></div>
<div style="position:absolute;left:175px;top:721px;width:7px;height:1px;background:rgba(0,0,0,0.45)"></div>
<div style="position:absolute;left:178px;top:716px;width:1px;height:7px;background:#000"></div>
<div style="position:absolute;left:179px;top:716px;width:1px;height:7px;background:rgba(0,0,0,0.45)"></div>
<div style="left:173.15px;top:735.6px;width:11px;height:11px;border:1px solid #9C9C9C;background:linear-gradient(135deg,#fff 0%,#F2F1EC 55%,#DCD8CA 100%)"></div>
<div style="position:absolute;left:175px;top:741px;width:7px;height:1px;background:#000"></div>
<div style="position:absolute;left:175px;top:742px;width:7px;height:1px;background:rgba(0,0,0,0.45)"></div>
<div style="position:absolute;left:178px;top:738px;width:1px;height:7px;background:#000"></div>
<div style="position:absolute;left:179px;top:738px;width:1px;height:7px;background:rgba(0,0,0,0.45)"></div>
<div style="left:148.1px;top:756.7px;width:11px;height:11px;border:1px solid #9C9C9C;background:linear-gradient(135deg,#fff 0%,#F2F1EC 55%,#DCD8CA 100%)"></div>
<div style="position:absolute;left:150px;top:762px;width:7px;height:1px;background:#000"></div>
<div style="position:absolute;left:150px;top:763px;width:7px;height:1px;background:rgba(0,0,0,0.45)"></div>
<div style="position:absolute;left:153px;top:759px;width:1px;height:7px;background:#000"></div>
<div style="position:absolute;left:154px;top:759px;width:1px;height:7px;background:rgba(0,0,0,0.45)"></div>
<div style="position:absolute;left:337.5px;top:498px;width:20.5px;height:275px;background:linear-gradient(to right,#EEEDE6,#FBFBF7)"></div>
<div class="sb" style="left:338.5px;top:499px;width:18.5px;height:20px"></div>
<svg style="left:0;top:0;overflow:visible" width="1" height="1"><path d="M342.75 511.5 L347.75 506.5 L352.75 511.5" fill="none" stroke="#34477A" stroke-width="2.9"/></svg>
<div class="sb" style="left:338.5px;top:752px;width:18.5px;height:20px"></div>
<svg style="left:0;top:0;overflow:visible" width="1" height="1"><path d="M342.75 759.5 L347.75 764.5 L352.75 759.5" fill="none" stroke="#34477A" stroke-width="2.9"/></svg>
<div class="sb" style="left:338.5px;top:524px;width:18.5px;height:34.5px"></div>
<div style="position:absolute;left:343.75px;top:537.25px;width:9px;height:1px;background:#F0F4FF;box-shadow:0 1px 0 #9FB4E6"></div>
<div style="position:absolute;left:343.75px;top:539.55px;width:9px;height:1px;background:#F0F4FF;box-shadow:0 1px 0 #9FB4E6"></div>
<div style="position:absolute;left:343.75px;top:541.85px;width:9px;height:1px;background:#F0F4FF;box-shadow:0 1px 0 #9FB4E6"></div>
<div style="position:absolute;left:343.75px;top:544.15px;width:9px;height:1px;background:#F0F4FF;box-shadow:0 1px 0 #9FB4E6"></div>
<div style="position:absolute;left:16px;top:772.5px;width:321.5px;height:20.5px;background:linear-gradient(to bottom,#EEEDE6,#FBFBF7)"></div>
<div class="sb" style="left:17px;top:773.5px;width:20px;height:18.5px"></div>
<svg style="left:0;top:0;overflow:visible" width="1" height="1"><path d="M29.5 777.75 L24.5 782.75 L29.5 787.75" fill="none" stroke="#34477A" stroke-width="2.9"/></svg>
<div class="sb" style="left:316.5px;top:773.5px;width:20px;height:18.5px"></div>
<svg style="left:0;top:0;overflow:visible" width="1" height="1"><path d="M324.0 777.75 L329.0 782.75 L324.0 787.75" fill="none" stroke="#34477A" stroke-width="2.9"/></svg>
<div class="sb" style="left:39.5px;top:773.5px;width:155.5px;height:18.5px"></div>
<div style="position:absolute;left:113.25px;top:778.75px;width:1px;height:9px;background:#F0F4FF;box-shadow:1px 0 0 #9FB4E6"></div>
<div style="position:absolute;left:115.55px;top:778.75px;width:1px;height:9px;background:#F0F4FF;box-shadow:1px 0 0 #9FB4E6"></div>
<div style="position:absolute;left:117.85px;top:778.75px;width:1px;height:9px;background:#F0F4FF;box-shadow:1px 0 0 #9FB4E6"></div>
<div style="position:absolute;left:120.15px;top:778.75px;width:1px;height:9px;background:#F0F4FF;box-shadow:1px 0 0 #9FB4E6"></div>
<div style="position:absolute;left:337.5px;top:772.5px;width:20.5px;height:20.5px;background:#ECE9D8"></div>
<div style="left:366.5px;top:496px;width:625.5px;height:258px;background:#fff;border-left:1.5px solid #716F64;border-top:1px solid #716F64;border-right:1px solid #fff;border-bottom:1px solid #fff"></div>
<div style="position:absolute;left:368.0px;top:497px;width:559.0px;height:23.5px;background:#ECE9D8"></div>
<div style="position:absolute;left:368.0px;top:521px;width:17.0px;height:47.299999999999955px;background:#ECE9D8"></div>
<div style="position:absolute;left:368.5px;top:497.5px;width:14.5px;height:1.2px;background:#fff"></div>
<div style="position:absolute;left:368.5px;top:497.5px;width:1.2px;height:23.0px;background:#fff"></div>
<div style="position:absolute;left:385.5px;top:497.5px;width:278.70000000000005px;height:1.2px;background:#fff"></div>
<div style="position:absolute;left:385.5px;top:497.5px;width:1.2px;height:23.0px;background:#fff"></div>
<div style="position:absolute;left:666.5px;top:497.5px;width:83.5px;height:1.2px;background:#fff"></div>
<div style="position:absolute;left:666.5px;top:497.5px;width:1.2px;height:23.0px;background:#fff"></div>
<div style="position:absolute;left:752.3px;top:497.5px;width:83.5px;height:1.2px;background:#fff"></div>
<div style="position:absolute;left:752.3px;top:497.5px;width:1.2px;height:23.0px;background:#fff"></div>
<div style="position:absolute;left:838.1px;top:497.5px;width:86.89999999999998px;height:1.2px;background:#fff"></div>
<div style="position:absolute;left:838.1px;top:497.5px;width:1.2px;height:23.0px;background:#fff"></div>
<div style="position:absolute;left:368.0px;top:520.0px;width:559.0px;height:1.6px;background:#141414"></div>
<div style="position:absolute;left:383.4px;top:497px;width:1.6px;height:71.29999999999995px;background:#141414"></div>
<div style="position:absolute;left:664.2px;top:497px;width:1.6px;height:23.5px;background:#141414"></div>
<div style="position:absolute;left:750px;top:497px;width:1.6px;height:23.5px;background:#141414"></div>
<div style="position:absolute;left:835.8px;top:497px;width:1.6px;height:23.5px;background:#141414"></div>
<div style="position:absolute;left:925px;top:497px;width:1.6px;height:23.5px;background:#141414"></div>
<div style="position:absolute;left:664.2px;top:521px;width:1.3px;height:47.299999999999955px;background:#C4C4C4"></div>
<div style="position:absolute;left:750px;top:521px;width:1.3px;height:47.299999999999955px;background:#C4C4C4"></div>
<div style="position:absolute;left:835.8px;top:521px;width:1.3px;height:47.299999999999955px;background:#C4C4C4"></div>
<div style="position:absolute;left:925px;top:521px;width:1.3px;height:47.299999999999955px;background:#C4C4C4"></div>
<div style="position:absolute;left:385px;top:544px;width:541px;height:1px;background:#C4C4C4"></div>
<div style="position:absolute;left:368.0px;top:544px;width:15.4px;height:1px;background:#101010"></div>
<div style="position:absolute;left:368.0px;top:545px;width:15.4px;height:1px;background:#707070"></div>
<div style="position:absolute;left:368.5px;top:546px;width:14.4px;height:1px;background:#fff"></div>
<div style="position:absolute;left:385px;top:567px;width:541px;height:1px;background:#C4C4C4"></div>
<div style="position:absolute;left:368.0px;top:567px;width:15.4px;height:1px;background:#101010"></div>
<div style="position:absolute;left:368.0px;top:568px;width:15.4px;height:1px;background:#707070"></div>
<div style="position:absolute;left:368.5px;top:522px;width:1px;height:22px;background:#fff"></div>
<div style="position:absolute;left:368.5px;top:546px;width:1px;height:22px;background:#fff"></div>
<div style="position:absolute;left:368.5px;top:521.5px;width:14.4px;height:1px;background:#fff"></div>
<svg style="left:368.0px;top:547.975px" width="17.0" height="16"><path d="M4.2 0.6 L12.4 8 L4.2 15.4 Z" fill="#000"/></svg>
<div style="left:385px;top:497px;width:279.20000000000005px;height:23.5px;overflow:hidden">
<div class="t" style="left:3.5px;top:4.55px;font-size:15px;letter-spacing:-0.3px">Укрупненное наименование работ</div></div>
<div style="left:666px;top:497px;width:84px;height:23.5px;overflow:hidden">
<div class="t" style="left:2.0px;top:4.55px;font-size:15px;letter-spacing:-0.3px">коэф.Мат.</div></div>
<div style="left:751.8px;top:497px;width:84.0px;height:23.5px;overflow:hidden">
<div class="t" style="left:2.0px;top:4.55px;font-size:15px;letter-spacing:-0.3px">коэф.Раб.</div></div>
<div style="left:837.6px;top:497px;width:87.39999999999998px;height:23.5px;overflow:hidden">
<div class="t" style="left:2.0px;top:4.55px;font-size:15px;letter-spacing:-0.3px">коэф.Транс.</div></div>
<div style="left:385px;top:521.0px;width:279.20000000000005px;height:22.65px;overflow:hidden">
<div class="t" style="left:2.7px;top:3.45px;font-size:15px;letter-spacing:-0.3px">Ремонт котла</div></div>
<div class="t" style="left:346px;width:400px;text-align:right;top:524.45px;font-size:15px;color:#000;font-weight:normal;letter-spacing:-0.3px;">1</div>
<div class="t" style="left:431.79999999999995px;width:400px;text-align:right;top:524.45px;font-size:15px;color:#000;font-weight:normal;letter-spacing:-0.3px;">1</div>
<div class="t" style="left:521px;width:400px;text-align:right;top:524.45px;font-size:15px;color:#000;font-weight:normal;letter-spacing:-0.3px;">12</div>
<div style="left:385px;top:544.65px;width:279.20000000000005px;height:22.65px;overflow:hidden">
<div class="t" style="left:2.7px;top:3.45px;font-size:15px;letter-spacing:-0.3px">Ремонт крыши</div></div>
<div class="t" style="left:346px;width:400px;text-align:right;top:548.10px;font-size:15px;color:#000;font-weight:normal;letter-spacing:-0.3px;">2</div>
<div class="t" style="left:431.79999999999995px;width:400px;text-align:right;top:548.10px;font-size:15px;color:#000;font-weight:normal;letter-spacing:-0.3px;">1,25</div>
<div class="t" style="left:521px;width:400px;text-align:right;top:548.10px;font-size:15px;color:#000;font-weight:normal;letter-spacing:-0.3px;">12</div>
<div style="position:absolute;left:969px;top:498px;width:20.5px;height:232.5px;background:linear-gradient(to right,#EEEDE6,#FBFBF7)"></div>
<div class="sb" style="left:970px;top:499px;width:18.5px;height:20px"></div>
<svg style="left:0;top:0;overflow:visible" width="1" height="1"><path d="M974.25 511.5 L979.25 506.5 L984.25 511.5" fill="none" stroke="#34477A" stroke-width="2.9"/></svg>
<div class="sb" style="left:970px;top:709.5px;width:18.5px;height:20px"></div>
<svg style="left:0;top:0;overflow:visible" width="1" height="1"><path d="M974.25 717.0 L979.25 722.0 L984.25 717.0" fill="none" stroke="#34477A" stroke-width="2.9"/></svg>
<div class="sb" style="left:970px;top:605.3px;width:18.5px;height:19.100000000000023px"></div>
<div style="position:absolute;left:975.25px;top:610.8499999999999px;width:9px;height:1px;background:#F0F4FF;box-shadow:0 1px 0 #9FB4E6"></div>
<div style="position:absolute;left:975.25px;top:613.1499999999999px;width:9px;height:1px;background:#F0F4FF;box-shadow:0 1px 0 #9FB4E6"></div>
<div style="position:absolute;left:975.25px;top:615.4499999999999px;width:9px;height:1px;background:#F0F4FF;box-shadow:0 1px 0 #9FB4E6"></div>
<div style="position:absolute;left:975.25px;top:617.7499999999999px;width:9px;height:1px;background:#F0F4FF;box-shadow:0 1px 0 #9FB4E6"></div>
<div style="position:absolute;left:368px;top:731.5px;width:598px;height:21px;background:linear-gradient(to bottom,#EEEDE6,#FBFBF7)"></div>
<div class="sb" style="left:369px;top:732.5px;width:20px;height:19px"></div>
<svg style="left:0;top:0;overflow:visible" width="1" height="1"><path d="M381.5 737.0 L376.5 742.0 L381.5 747.0" fill="none" stroke="#34477A" stroke-width="2.9"/></svg>
<div class="sb" style="left:945px;top:732.5px;width:20px;height:19px"></div>
<svg style="left:0;top:0;overflow:visible" width="1" height="1"><path d="M952.5 737.0 L957.5 742.0 L952.5 747.0" fill="none" stroke="#34477A" stroke-width="2.9"/></svg>
<div class="sb" style="left:924.5px;top:732.5px;width:19.5px;height:19px"></div>
<div style="position:absolute;left:930.25px;top:738.0px;width:1px;height:9px;background:#F0F4FF;box-shadow:1px 0 0 #9FB4E6"></div>
<div style="position:absolute;left:932.55px;top:738.0px;width:1px;height:9px;background:#F0F4FF;box-shadow:1px 0 0 #9FB4E6"></div>
<div style="position:absolute;left:934.85px;top:738.0px;width:1px;height:9px;background:#F0F4FF;box-shadow:1px 0 0 #9FB4E6"></div>
<div style="position:absolute;left:937.15px;top:738.0px;width:1px;height:9px;background:#F0F4FF;box-shadow:1px 0 0 #9FB4E6"></div>
<div style="position:absolute;left:966px;top:731.5px;width:25px;height:21.5px;background:#ECE9D8"></div>
<div style="left:370.5px;top:761px;width:99px;height:32px;border-right:1.5px solid #404040;border-bottom:1.5px solid #404040;border-top:1px solid #fff;border-left:1px solid #fff;background:#ECE9D8;box-shadow:inset -1px -1px 0 #A0A0A0"></div>
<div class="t" style="left:370.5px;width:99px;text-align:center;top:768.0px;font-size:15px;letter-spacing:-0.3px">Сохранить</div>
<div style="left:476px;top:761px;width:98px;height:32px;border-right:1.5px solid #404040;border-bottom:1.5px solid #404040;border-top:1px solid #fff;border-left:1px solid #fff;background:#ECE9D8;box-shadow:inset -1px -1px 0 #A0A0A0"></div>
<div class="t" style="left:476px;width:98px;text-align:center;top:768.0px;font-size:15px;letter-spacing:-0.3px">Удалить</div>
<div style="position:absolute;left:5px;top:802.5px;width:995px;height:1px;background:#FFFFFF"></div>
<div style="position:absolute;left:5px;top:809.2px;width:995px;height:1.2px;background:#C0BCAC"></div>
<div style="position:absolute;left:399.5px;top:810px;width:1px;height:21px;background:#fff"></div>
<div style="position:absolute;left:403.5px;top:810px;width:1px;height:21px;background:#ACA899"></div>
<div class="t" style="left:406px;top:812.75px;font-size:15px;color:#000;font-weight:normal;letter-spacing:-0.45px;transform:none;">Ресурсная ведомость подразделений</div>
<svg style="left:984px;top:815px" width="16" height="16"><path d="M15 2 L2 15 M15 7 L7 15 M15 12 L12 15" stroke="#A8A494" stroke-width="1.6"/><path d="M15.5 3 L3 15.5 M15.5 8 L8 15.5" stroke="#fff" stroke-width="0.8"/></svg></div></body></html>
